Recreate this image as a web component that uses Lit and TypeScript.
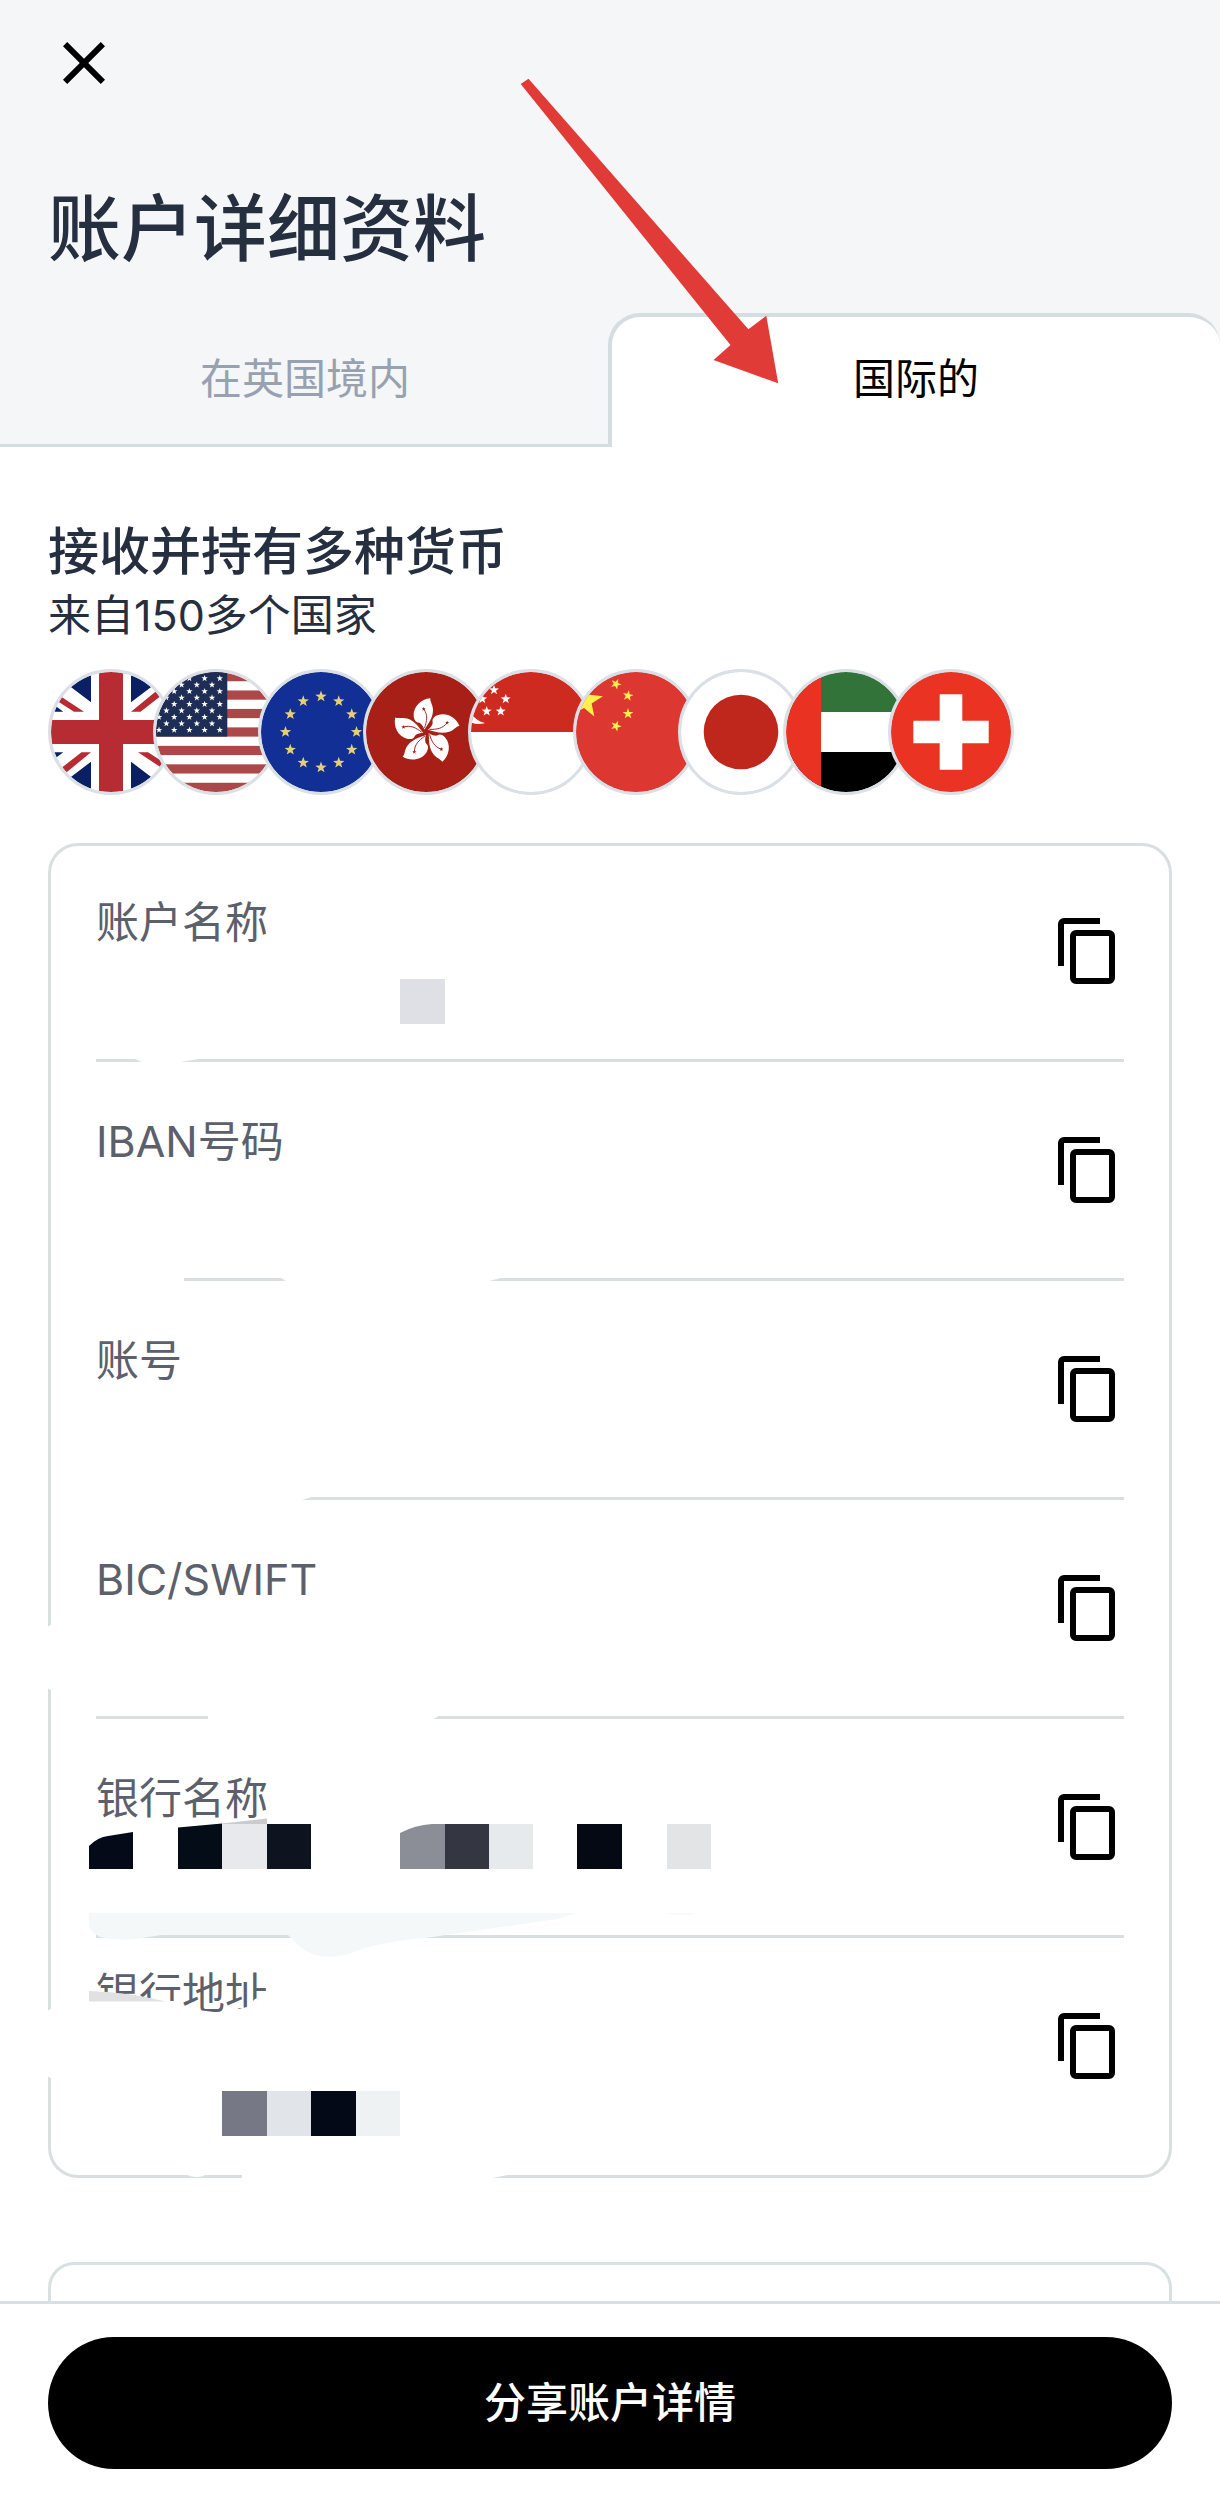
import { LitElement, html, svg, css } from "lit";
import { customElement, property } from "lit/decorators.js";

const starPoints = (cx: number, cy: number, r: number, turn = 0): string => {
  const points: string[] = [];
  for (let i = 0; i < 10; i++) {
    const radius = i % 2 === 0 ? r : r * 0.4;
    const angle = ((i * 36 - 90 + turn) * Math.PI) / 180;
    points.push(`${(cx + radius * Math.cos(angle)).toFixed(2)},${(cy + radius * Math.sin(angle)).toFixed(2)}`);
  }
  return points.join(" ");
};

const star = (cx: number, cy: number, r: number, fill: string, turn = 0) =>
  svg`<polygon points=${starPoints(cx, cy, r, turn)} fill=${fill}></polygon>`;

const unionHalf = svg`
  <path fill="#0a2063" d="M0 0H40V30.3ZM0 30.5L12.3 39.7H0ZM80 0H120L80 30.3ZM120 30.5L107.7 39.7H120Z"/>
  <path fill="#b72b33" d="M0 18L33 39.7H23L0 25ZM80 39.7L120 7V16L89.5 39.7Z"/>`;

const usStars = () => {
  const out = [];
  for (let row = 0; row < 9; row++) {
    const y = 6.4 + row * 6.45;
    const start = row % 2 === 0 ? 3 : 10.4;
    for (let x = start; x < 68; x += 15.2) out.push(star(x, y, 3.4, "#fff"));
  }
  return out;
};

const flags: Record<string, unknown> = {
  gb: svg`
    <rect width="120" height="120" fill="#fff"/>
    ${unionHalf}
    <g transform="rotate(180 60 60)">${unionHalf}</g>
    <path fill="#b72b33" d="M48 0h24v48h48v24H72v48H48V72H0V48h48z"/>`,
  us: svg`
    <rect width="120" height="120" fill="#fff"/>
    ${[0, 2, 4, 6, 8, 10, 12].map(
      (n) => svg`<rect y=${(n * 120) / 13} width="120" height=${120 / 13} fill="#ad484a"></rect>`
    )}
    <rect width="71.3" height="64.6" fill="#1e2d55"/>
    ${usStars()}`,
  eu: svg`
    <rect width="120" height="120" fill="#112f94"/>
    ${Array.from({ length: 12 }, (_, i) =>
      star(60 + 35.5 * Math.sin((i * Math.PI) / 6), 60 - 35.5 * Math.cos((i * Math.PI) / 6), 6, "#e6cf74")
    )}`,
  hk: svg`
    <rect width="120" height="120" fill="#a81f17"/>
    ${[0, 72, 144, 216, 288].map(
      (a) => svg`<g transform="translate(60 60) rotate(${a})">
        <path fill="#fff" d="M4.300-33.700C-5-33-13-25-12.300-16C-12-12-10-9.500-7.500-9.500C-5-9-3-6-1.500-2.500C2-8 7-14 7-22C7-27 4-30 4.300-33.700Z"/>
        <path fill="none" stroke="#a81f17" stroke-width="0.900" d="M-2.300-23C2-17 1-11-1.500-4"/>
        <polygon fill="#a81f17" points=${starPoints(-2.3, -23, 2.2)}></polygon>
      </g>`
    )}`,
  sg: svg`
    <rect width="120" height="120" fill="#fff"/>
    <rect width="120" height="60" fill="#cd2b1f"/>
    <circle cx="8" cy="30" r="22" fill="#fff"/>
    <circle cx="18" cy="30" r="21.300" fill="#cd2b1f"/>
    ${[
      [23, 18],
      [34.7, 27],
      [29.7, 39.3],
      [15.7, 39.3],
      [11.3, 27],
    ].map(([x, y]) => star(x, y, 5.2, "#fff"))}`,
  cn: svg`
    <rect width="120" height="120" fill="#dc3831"/>
    ${star(8.7, 28.5, 18.7, "#fdf04c", 5)}
    ${star(40, 12, 5.6, "#fdf04c", 24)}
    ${star(52, 23.7, 5.6, "#fdf04c", 10)}
    ${star(52, 41.7, 5.6, "#fdf04c", 0)}
    ${star(40, 54, 5.6, "#fdf04c", 22)}`,
  jp: svg`
    <rect width="120" height="120" fill="#fff"/>
    <circle cx="60" cy="60" r="37.300" fill="#bf271d"/>`,
  ae: svg`
    <rect width="120" height="40" fill="#317339"/>
    <rect y="40" width="120" height="40" fill="#fff"/>
    <rect y="80" width="120" height="40" fill="#000"/>
    <rect width="35" height="120" fill="#ea3223"/>`,
  ch: svg`
    <rect width="120" height="120" fill="#ea3323"/>
    <path fill="#fff" d="M48.700 22.300h22.600v26.400h26.400v22.600H71.300v26.400H48.700V71.300H22.300V48.700h26.400z"/>`,
};

@customElement("flag-badge")
export class FlagBadge extends LitElement {
  @property() code = "gb";
  @property() name = "";

  static styles = css`
    :host {
      display: block;
    }
    .badge {
      display: block;
      box-sizing: border-box;
      width: 126px;
      height: 126px;
      border: 3px solid #dae0e5;
      border-radius: 50%;
      background: #dae0e5;
      overflow: hidden;
    }
    .art {
      display: block;
      width: 120px;
      height: 120px;
      border-radius: 50%;
    }
  `;

  render() {
    return html`<span class="badge" role="img" aria-label=${this.name}>
      <svg class="art" viewBox="0 0 120 120" aria-hidden="true">${flags[this.code]}</svg>
    </span>`;
  }
}

/* Mosaic tiles and brushed-out areas that hide the private values. */
const redaction = svg`
  <rect x="400" y="979" width="45" height="45" fill="#dfe0e5"/>
  <g fill="#fff">
    <path d="M133 1058L144 1063H175L204 1058Z"/>
    <path d="M90 1277H184V1282H90Z"/>
    <path d="M280 1277L287 1282H486L504 1277Z"/>
    <path d="M90 1496H315L299 1501H90Z"/>
    <path d="M208 1715H440L432 1720H208Z"/>
    <path d="M44 1629L52 1624V1691L44 1686Z"/>
    <path d="M44 2013L52 2008V2079L44 2074Z"/>
    <path d="M184 2174L190 2176Q197 2178 203 2176L208 2174Z"/>
    <path d="M242 2174H512L488 2179H242Z"/>
    <path d="M88 2001H176L190 2009L222 2013L238 2009L247 2007L255 1999L272 1992V2036H88Z"/>
  </g>
  <path fill="#e1e1e3" d="M89 1991Q128 1992 166 2001.500H89Z"/>
  <path fill="#f4f8f9" d="M89 1913H576L558 1919L425 1938Q378 1942 351 1953Q320 1963 300 1947L288 1935H161L142 1938Q120 1942 100 1937Q90 1932 89 1926Z"/>
  <path fill="#f8fafb" d="M664 1913H698L690 1915H674Z"/>
  <path fill="#040a17" d="M89 1846Q98 1837 108 1836L133 1832V1869H89Z"/>
  <path fill="#040c18" d="M178 1827.500L222 1823.500V1869H178Z"/>
  <path fill="#cbcbcf" d="M222 1823.500L267 1818.500V1824H222Z"/>
  <rect x="222" y="1824" width="45" height="45" fill="#e8e9ed"/>
  <rect x="267" y="1824" width="44" height="45" fill="#0e1320"/>
  <path fill="#8b8e96" d="M400 1833Q415 1825 432 1824H445V1869H400Z"/>
  <rect x="445" y="1824" width="44" height="45" fill="#343742"/>
  <rect x="489" y="1824" width="44" height="45" fill="#e6eaed"/>
  <rect x="577" y="1824" width="45" height="45" fill="#040914"/>
  <rect x="667" y="1824" width="44" height="45" fill="#e3e4e6"/>
  <rect x="222" y="2091" width="45" height="45" fill="#777885"/>
  <rect x="267" y="2091" width="44" height="45" fill="#e1e5ea"/>
  <rect x="311" y="2091" width="45" height="45" fill="#030916"/>
  <rect x="356" y="2091" width="44" height="45" fill="#eef2f3"/>`;

@customElement("app-root")
export class AppRoot extends LitElement {
  static styles = css`
    :host {
      display: block;
      font-family: Inter, "Noto Sans CJK SC", sans-serif;
      color: #262f3f;
      background: #fff;
    }
    .page {
      position: relative;
      display: flex;
      flex-direction: column;
      min-height: 100vh;
      overflow: hidden;
    }
    button {
      margin: 0;
      padding: 0;
      border: 0;
      background: none;
      font: inherit;
      color: inherit;
      cursor: pointer;
    }
    .icon {
      display: block;
      width: 72px;
      height: 72px;
      fill: #000;
    }
    .top {
      display: flex;
      flex-direction: column;
      background: #f4f6f8;
      padding-top: 27px;
    }
    .close {
      align-self: flex-start;
      margin-left: 48px;
    }
    .title {
      margin: 86px 48px 40px;
      font-size: 73px;
      line-height: 88px;
      font-weight: 500;
    }
    .tabs {
      display: grid;
      grid-template-columns: 1fr 1fr;
    }
    .tab {
      box-sizing: border-box;
      height: 134px;
      font-size: 42px;
      line-height: 60px;
      color: #98a1b0;
      border-bottom: 3px solid #d6dde1;
    }
    .tab.active {
      margin-left: -2px;
      padding-bottom: 6px;
      color: #000;
      background: #fff;
      border: solid #d6dde1;
      border-width: 4px 0 0 4px;
      border-radius: 32px 32px 0 0;
    }
    .body {
      flex: 1;
      display: flex;
      flex-direction: column;
      padding: 73px 48px 0;
    }
    .heading {
      margin: 0;
      font-size: 51px;
      line-height: 64px;
      font-weight: 500;
    }
    .sub {
      margin: 0 0 23px;
      font-size: 43px;
      line-height: 62px;
    }
    .flags {
      display: flex;
      margin: 0 0 48px;
      padding: 0;
      list-style: none;
    }
    .flag + .flag {
      margin-left: -21px;
    }
    .card {
      position: relative;
      box-shadow: inset 0 0 0 3px #d9dfe1;
      border-radius: 30px;
      padding: 0 48px 24px;
    }
    .rows {
      margin: 0;
      padding: 0;
      list-style: none;
    }
    .row {
      display: flex;
      justify-content: space-between;
      align-items: center;
      min-height: 216px;
    }
    .row + .row {
      border-top: 3px solid #d9dfe1;
    }
    .label {
      align-self: flex-start;
      padding-top: 49px;
      font-size: 43px;
      line-height: 60px;
      color: #5c606b;
    }
    .row:last-child .label {
      padding-top: 25px;
    }
    .redaction {
      position: absolute;
      left: -8px;
      top: -3px;
      width: 720px;
      height: 1345px;
      pointer-events: none;
    }
    .next {
      flex: 1;
      min-height: 36px;
      margin-top: 84px;
      border: 3px solid #d9e0e2;
      border-bottom: 0;
      border-radius: 26px 26px 0 0;
    }
    .footer {
      display: flex;
      padding: 33px 48px 28px;
      border-top: 3px solid #d8dfe5;
      background: #fff;
    }
    .share {
      flex: 1;
      height: 132px;
      border-radius: 66px;
      background: #000;
      color: #fff;
      font-size: 42px;
      line-height: 60px;
      font-weight: 500;
    }
    .pointer {
      position: absolute;
      left: 510px;
      top: 70px;
      width: 280px;
      height: 320px;
      pointer-events: none;
    }
  `;

  private labels = ["账户名称", "IBAN号码", "账号", "BIC/SWIFT", "银行名称", "银行地址"];

  private countries = [
    ["gb", "英国"],
    ["us", "美国"],
    ["eu", "欧盟"],
    ["hk", "香港"],
    ["sg", "新加坡"],
    ["cn", "中国"],
    ["jp", "日本"],
    ["ae", "阿联酋"],
    ["ch", "瑞士"],
  ];

  render() {
    return html`
      <div class="page">
        <header class="top">
          <button class="close" type="button" aria-label="关闭">
            <svg class="icon" viewBox="0 0 24 24" aria-hidden="true">
              <path d="M19 6.410L17.590 5 12 10.590 6.410 5 5 6.410 10.590 12 5 17.590 6.410 19 12 13.410 17.590 19 19 17.590 13.410 12z" />
            </svg>
          </button>
          <h1 class="title">账户详细资料</h1>
          <div class="tabs" role="tablist">
            <button class="tab" type="button" role="tab" aria-selected="false">在英国境内</button>
            <button class="tab active" type="button" role="tab" aria-selected="true">国际的</button>
          </div>
        </header>

        <main class="body">
          <h2 class="heading">接收并持有多种货币</h2>
          <p class="sub">来自150多个国家</p>
          <ul class="flags">
            ${this.countries.map(
              ([code, name]) => html`<li class="flag"><flag-badge code=${code} name=${name}></flag-badge></li>`
            )}
          </ul>

          <section class="card">
            <ul class="rows">
              ${this.labels.map(
                (label) => html`<li class="row">
                  <span class="label">${label}</span>
                  <button type="button" aria-label="复制${label}">
                    <svg class="icon" viewBox="0 0 24 24" aria-hidden="true">
                      <path d="M16 1H4a2 2 0 0 0-2 2v14h2V3h12V1zm3 4H8a2 2 0 0 0-2 2v14a2 2 0 0 0 2 2h11a2 2 0 0 0 2-2V7a2 2 0 0 0-2-2zm0 16H8V7h11v14z" />
                    </svg>
                  </button>
                </li>`
              )}
            </ul>
            <svg class="redaction" viewBox="40 840 720 1345" aria-hidden="true">${redaction}</svg>
          </section>

          <section class="next"></section>
        </main>

        <footer class="footer">
          <button class="share" type="button">分享账户详情</button>
        </footer>

        <svg class="pointer" viewBox="510 70 280 320" aria-hidden="true">
          <path fill="#e13b38" d="M520.700 84L528.500 78.700L748.400 329.300L766.300 315.700L778.200 383.300L713.500 360L730.500 345Z" />
        </svg>
      </div>
    `;
  }
}
